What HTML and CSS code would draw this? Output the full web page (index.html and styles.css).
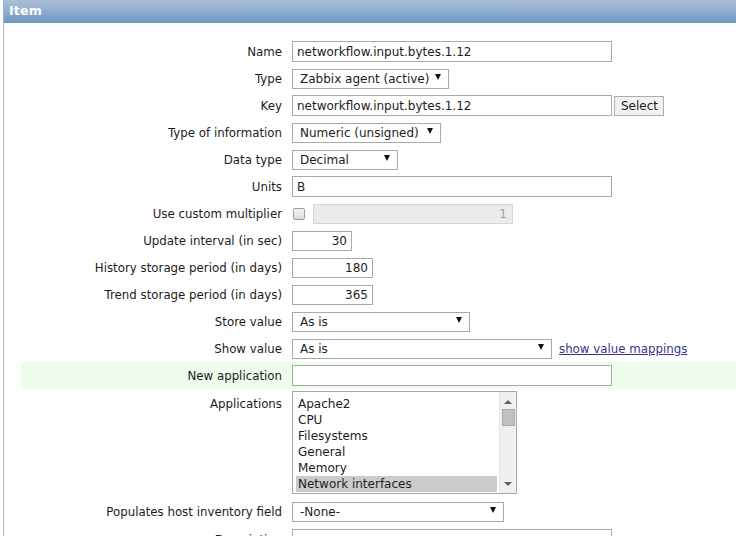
FILE: index.html
```html
<!DOCTYPE html>
<html>
<head>
<meta charset="utf-8">
<link rel="stylesheet" href="styles.css">
</head>
<body>
<div class="panel">
  <div class="hdr">Item</div>
  <div class="form">
    <div class="row"><div class="lbl">Name</div><div class="fld"><input class="txt w320" type="text" value="networkflow.input.bytes.1.12"></div></div>
    <div class="row"><div class="lbl">Type</div><div class="fld"><div class="sel" style="width:157px"><span>Zabbix agent (active)</span><i class="arr"></i></div></div></div>
    <div class="row"><div class="lbl">Key</div><div class="fld"><input class="txt w320" type="text" value="networkflow.input.bytes.1.12"><button class="btn">Select</button></div></div>
    <div class="row"><div class="lbl">Type of information</div><div class="fld"><div class="sel" style="width:149px"><span>Numeric (unsigned)</span><i class="arr"></i></div></div></div>
    <div class="row"><div class="lbl">Data type</div><div class="fld"><div class="sel" style="width:106px"><span>Decimal</span><i class="arr"></i></div></div></div>
    <div class="row"><div class="lbl">Units</div><div class="fld"><input class="txt w320" type="text" value="B"></div></div>
    <div class="row"><div class="lbl">Use custom multiplier</div><div class="fld"><span class="chk"></span><input class="txt num dis" type="text" value="1" disabled></div></div>
    <div class="row"><div class="lbl">Update interval (in sec)</div><div class="fld"><input class="txt num w60" type="text" value="30"></div></div>
    <div class="row"><div class="lbl">History storage period (in days)</div><div class="fld"><input class="txt num w81" type="text" value="180"></div></div>
    <div class="row"><div class="lbl">Trend storage period (in days)</div><div class="fld"><input class="txt num w81" type="text" value="365"></div></div>
    <div class="row"><div class="lbl">Store value</div><div class="fld"><div class="sel" style="width:178px"><span>As is</span><i class="arr"></i></div></div></div>
    <div class="row"><div class="lbl">Show value</div><div class="fld"><div class="sel" style="width:260px"><span>As is</span><i class="arr"></i></div><a class="lnk" href="#">show value mappings</a></div></div>
    <div class="row green"><div class="lbl">New application</div><div class="fld"><input class="txt w320" type="text" value=""></div></div>
    <div class="row top"><div class="lbl">Applications</div><div class="fld">
      <div class="lst">
        <div class="opts">
          <div class="opt">Apache2</div>
          <div class="opt">CPU</div>
          <div class="opt">Filesystems</div>
          <div class="opt">General</div>
          <div class="opt">Memory</div>
          <div class="opt on">Network interfaces</div>
        </div>
        <div class="sb"><i class="up"></i><div class="thumb"></div><i class="dn"></i></div>
      </div>
    </div></div>
    <div class="row"><div class="lbl">Populates host inventory field</div><div class="fld"><div class="sel" style="width:212px"><span>-None-</span><i class="arr"></i></div></div></div>
    <div class="row top desc"><div class="lbl">Description</div><div class="fld"><div class="area"></div></div></div>
  </div>
</div>
</body>
</html>
```
FILE: styles.css
```css
html, body {
  margin: 0;
  padding: 0;
  background: #fff;
  overflow: hidden;
}
body {
  font-family: "DejaVu Sans", Verdana, sans-serif;
  font-size: 12px;
  color: #1c1c1c;
}
.panel {
  margin-left: 3px;
  border-left: 1px solid #a3b8d1;
  min-height: 560px;
}
.hdr {
  height: 23px;
  box-sizing: border-box;
  padding: 3px 0 0 5px;
  font-weight: bold;
  font-size: 12.5px;
  color: #fff;
  background: linear-gradient(#a8bed7 0%, #93afcf 45%, #7aa0c6 75%, #6f97bf 100%);
  letter-spacing: 0.2px;
}
.form {
  padding-top: 15px;
  margin-left: 17px;
}
.row {
  display: grid;
  grid-template-columns: 261px 1fr;
  column-gap: 10px;
  min-height: 27px;
  align-items: center;
}
.row.green {
  background: #eefcec;
}
.row.top {
  align-items: start;
  padding-top: 2px;
  padding-bottom: 4px;
  min-height: 0;
}
.row.top .lbl {
  padding-top: 6px;
}
.lbl {
  text-align: right;
  white-space: nowrap;
  font-size: 11.8px;
}
.fld {
  display: flex;
  align-items: center;
}
.txt {
  font-family: "DejaVu Sans", Verdana, sans-serif;
  font-size: 12px;
  color: #1c1c1c;
  height: 21px;
  box-sizing: border-box;
  border: 1px solid #a9a9a9;
  padding: 0 4px;
  margin: 0;
  background: #fff;
  outline: none;
}
.w320 { width: 320px; }
.w60 { width: 60px; height: 20px; }
.w81 { width: 81px; height: 20px; }
.num { text-align: right; }
.dis {
  width: 200px;
  height: 20px;
  margin-left: 8px;
  background: #ebebeb;
  border-color: #d6d6d6;
  color: #a0a0a0;
  padding-right: 5px;
}
.chk {
  display: inline-block;
  width: 10px;
  height: 10px;
  margin-left: 1px;
  border: 1px solid #9b9b9b;
  border-radius: 2px;
  background: linear-gradient(#f2f2f2, #dcdcdc);
}
.btn {
  margin-left: 2px;
  height: 20px;
  padding: 0 6px;
  font-family: "DejaVu Sans", Verdana, sans-serif;
  font-size: 12px;
  color: #1c1c1c;
  background: #f2f2f2;
  border: 1px solid #adadad;
  border-radius: 0;
  width: 50px;
}
.sel {
  box-sizing: border-box;
  height: 20px;
  border: 1px solid #a9a9a9;
  background: #fff;
  display: flex;
  align-items: center;
  justify-content: space-between;
  padding: 0 7px 0 7px;
  white-space: nowrap;
}
.arr {
  display: block;
  width: 0;
  height: 0;
  border-left: 3px solid transparent;
  border-right: 3px solid transparent;
  border-top: 6px solid #111;
  margin-top: -3px;
}
.lnk {
  margin-left: 7px;
  font-size: 11.8px;
  color: #35358a;
  text-decoration: underline;
}
.lst {
  width: 225px;
  height: 103px;
  box-sizing: border-box;
  border: 1px solid #a9a9a9;
  display: flex;
  background: #fff;
}
.opts {
  flex: 1;
  padding: 4px 0 0 3px;
}
.opt {
  height: 16px;
  line-height: 16px;
  padding-left: 2px;
}
.opt.on {
  background: #cbcbcb;
  margin-right: 2px;
}
.sb {
  width: 17px;
  background: #f0f0f0;
  border-left: 1px solid #e6e6e6;
  display: flex;
  flex-direction: column;
  align-items: center;
  box-sizing: border-box;
}
.up, .dn {
  display: block;
  width: 0;
  height: 0;
  border-left: 4px solid transparent;
  border-right: 4px solid transparent;
}
.up {
  border-bottom: 4px solid #606060;
  margin-top: 8px;
}
.dn {
  border-top: 4px solid #606060;
  margin-top: auto;
  margin-bottom: 7px;
}
.thumb {
  width: 13px;
  height: 17px;
  margin-top: 5px;
  box-sizing: border-box;
  background: #c1c1c1;
  border: 1px solid #a8a8a8;
}
.area {
  width: 320px;
  height: 60px;
  box-sizing: border-box;
  border: 1px solid #a9a9a9;
  margin-top: 2px;
}
```
